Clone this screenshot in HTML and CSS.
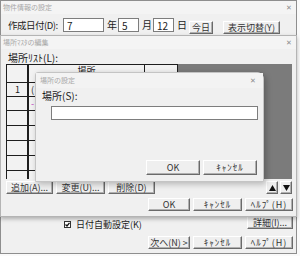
FILE: index.html
```html
<!DOCTYPE html>
<html>
<head>
    <meta charset="utf-8">
    <title>物件情報の設定</title>
    <link rel="stylesheet" href="styles.css">
</head>
<body>
    <!-- 物件情報の設定 (back window) -->
    <div class="win win-main">
        <div class="titlebar"><span>物件情報の設定</span><span class="close">✕</span></div>
        <div class="date-row">
            <label class="date-label">作成日付(D):</label>
            <input class="txt w-year" type="text" value="7">
            <span class="unit">年</span>
            <input class="txt w-small" type="text" value="5">
            <span class="unit">月</span>
            <input class="txt w-small" type="text" value="12">
            <span class="unit">日</span>
            <button class="btn btn-today">今日</button>
            <button class="btn btn-switch">表示切替(Y)</button>
        </div>
        <div class="main-spacer"></div>
        <div class="detail-row">
            <label class="check">
                <span class="box"><svg width="5" height="5" viewBox="0 0 5 5"><path d="M0.5 2.5 L2 4 L4.5 0.8" fill="none" stroke="#111" stroke-width="1.3"/></svg></span>
                日付自動設定(K)
            </label>
            <button class="btn btn-detail">詳細(I)...</button>
        </div>
        <div class="btn-row">
            <button class="btn w-ok">次へ(N) &gt;</button>
            <button class="btn w-cancel kana">ｷｬﾝｾﾙ</button>
            <button class="btn w-help kana">ﾍﾙﾌﾟ(H)</button>
        </div>
    </div>

    <!-- 場所マスタの編集 -->
    <div class="win win-edit">
        <div class="titlebar"><span>場所ﾏｽﾀの編集</span><span class="close">✕</span></div>
        <div class="list-label">場所ﾘｽﾄ(L):</div>
        <div class="grid">
            <div class="cells">
                <div class="rh"></div><div class="ch">場所</div><div class="ch"></div>
                <div class="rh">1</div><div class="cell">(</div><div class="cell"></div>
                <div class="rh"></div><div class="cell"><span class="mark">-</span></div><div class="cell"></div>
                <div class="rh"></div><div class="cell"></div><div class="cell"></div>
                <div class="rh"></div><div class="cell"></div><div class="cell"></div>
                <div class="rh"></div><div class="cell"></div><div class="cell"></div>
                <div class="rh"></div><div class="cell"></div><div class="cell"></div>
                <div class="rh"></div><div class="cell"></div><div class="cell"></div>
            </div>
        </div>
        <div class="edit-row">
            <div class="edit-left">
                <button class="btn w-add">追加(A)...</button>
                <button class="btn w-change">変更(U)...</button>
                <button class="btn w-add">削除(D)</button>
            </div>
            <div class="arrows">
                <button class="btn arrow"><svg width="7" height="6" viewBox="0 0 7 6"><path d="M3.5 0 L7 6 L0 6 Z" fill="#111"/></svg></button>
                <button class="btn arrow"><svg width="7" height="6" viewBox="0 0 7 6"><path d="M0 0 L7 0 L3.5 6 Z" fill="#111"/></svg></button>
            </div>
        </div>
        <div class="btn-row edit-ok">
            <button class="btn w-ok">OK</button>
            <button class="btn w-cancel kana">ｷｬﾝｾﾙ</button>
            <button class="btn w-help kana">ﾍﾙﾌﾟ(H)</button>
        </div>
    </div>

    <!-- 場所の設定 -->
    <div class="win win-dlg">
        <div class="titlebar dlg-title"><span>場所の設定</span><span class="close">✕</span></div>
        <div class="dlg-label">場所(S):</div>
        <input class="txt dlg-input" type="text" value="">
        <div class="dlg-buttons">
            <button class="btn dlg-btn">OK</button>
            <button class="btn dlg-btn kana">ｷｬﾝｾﾙ</button>
        </div>
    </div>
</body>
</html>
```

FILE: styles.css
```css
body {
    margin: 0;
    width: 300px;
    height: 256px;
    position: relative;
    overflow: hidden;
    background: #fafafa;
    font-family: "Noto Sans CJK JP", "Noto Sans", sans-serif;
    font-size: 10px;
    color: #1c1c1c;
}

/* windows */
.win {
    position: absolute;
    box-sizing: border-box;
    display: flex;
    flex-direction: column;
    background: #f0f0f0;
    border: 1px solid #b4b4b4;
}

.win-main {
    left: 0;
    top: 0;
    width: 297px;
    height: 254px;
    border-color: #8e8e8e;
}

.win-edit {
    left: 0;
    top: 35px;
    width: 297px;
    height: 182px;
    box-shadow: 0 2px 4px rgba(0, 0, 0, 0.28);
}

.win-dlg {
    left: 35px;
    top: 72px;
    width: 229px;
    height: 110px;
    border-color: #c4c4c4;
    border-radius: 3px 7px 0 0;
    box-shadow: 2px 2px 6px rgba(0, 0, 0, 0.25);
}

.titlebar {
    display: flex;
    justify-content: space-between;
    align-items: center;
    height: 13px;
    padding: 0 4px 0 2px;
    font-size: 7px;
    line-height: 1;
    color: #a8a8a8;
    background: #f4f4f4;
}

.close {
    font-size: 7px;
    color: #8c8c8c;
}

/* controls */
.txt {
    box-sizing: border-box;
    height: 14px;
    margin: 0;
    padding: 0 3px;
    border: 1px solid #7d7d7d;
    background: #fff;
    font-family: inherit;
    font-size: 10px;
    color: #1c1c1c;
    outline: none;
}

.btn {
    box-sizing: border-box;
    display: flex;
    align-items: center;
    justify-content: center;
    height: 13px;
    margin: 0;
    padding: 0;
    border: 1px solid;
    border-color: #ffffff #6a6a6a #6a6a6a #ffffff;
    box-shadow: inset -1px -1px 0 #b0b0b0;
    background: #efefef;
    font-family: inherit;
    font-size: 9px;
    line-height: 1;
    white-space: nowrap;
    color: #333;
}

.btn.kana {
    letter-spacing: 1px;
}

/* main window */
.date-row {
    display: flex;
    align-items: flex-start;
    height: 15px;
    margin-top: 4px;
    padding-left: 7px;
}

.date-label {
    flex: none;
    width: 55px;
    line-height: 14px;
    font-size: 9.5px;
    letter-spacing: -0.5px;
    white-space: nowrap;
}

.w-year {
    width: 41px;
}

.w-small {
    width: 21px;
}

.unit {
    width: 10px;
    margin: 0 1px 0 3px;
    line-height: 14px;
}

.btn-today {
    width: 24px;
    margin-top: 3px;
    margin-left: 1px;
}

.btn-switch {
    width: 57px;
    margin-top: 3px;
    margin-left: 10px;
}

.main-spacer {
    height: 183px;
}

.detail-row {
    display: flex;
    justify-content: space-between;
    align-items: flex-start;
    height: 14px;
    padding: 0 3px 0 63px;
}

.check {
    display: flex;
    align-items: center;
    gap: 5px;
    margin-top: 4px;
    font-size: 9px;
    line-height: 9px;
}

.box {
    box-sizing: border-box;
    display: flex;
    align-items: center;
    justify-content: center;
    width: 7px;
    height: 7px;
    border: 1px solid #333;
    background: #fff;
}

.btn-detail {
    width: 46px;
}

.btn-row {
    display: flex;
    justify-content: flex-end;
    gap: 3px;
    margin-top: 6px;
    padding-right: 3px;
}

.w-ok {
    width: 42px;
}

.w-cancel {
    width: 49px;
}

.w-help {
    width: 48px;
}

/* edit window */
.list-label {
    height: 15px;
    padding-left: 7px;
    line-height: 18px;
    font-size: 10px;
}

.grid {
    height: 115px;
    margin-left: 5px;
    width: 286px;
    background: #7b7b7b;
    overflow: hidden;
}

.cells {
    display: grid;
    grid-template-columns: 21px 115px 32px;
    grid-template-rows: 17px 13px 13px repeat(5, 14px);
    gap: 1px;
    width: max-content;
    border: 1px solid #1e1e1e;
    background: #1e1e1e;
}

.cells > div {
    background: #f2f2f2;
    overflow: hidden;
    white-space: nowrap;
    font-size: 9px;
    line-height: 13px;
}

.cells .rh {
    box-shadow: inset -1px 0 0 #1e1e1e;
    text-align: center;
}

.cells .ch {
    text-align: center;
    line-height: 12px;
}

.cells .cell {
    padding-left: 2px;
}

.mark {
    color: #c040c0;
}

.edit-row {
    display: flex;
    justify-content: space-between;
    margin-top: 2px;
    padding: 0 4px 0 5px;
}

.edit-left {
    display: flex;
    gap: 3px;
}

.w-add {
    width: 47px;
}

.w-change {
    width: 49px;
}

.arrows {
    display: flex;
    gap: 2px;
}

.arrow {
    width: 12px;
}

.edit-ok {
    margin-top: 4px;
}

/* place dialog */
.dlg-title {
    height: 15px;
    padding: 0 7px 0 4px;
    background: #f3f3f3;
}

.dlg-label {
    height: 18px;
    padding-left: 6px;
    line-height: 16px;
    font-size: 10px;
}

.dlg-input {
    width: 207px;
    height: 14px;
    margin-left: 15px;
}

.dlg-buttons {
    display: flex;
    justify-content: flex-end;
    gap: 3px;
    margin-top: 40px;
    padding-right: 6px;
}

.dlg-btn {
    width: 54px;
    height: 15px;
    font-size: 9px;
}
```
